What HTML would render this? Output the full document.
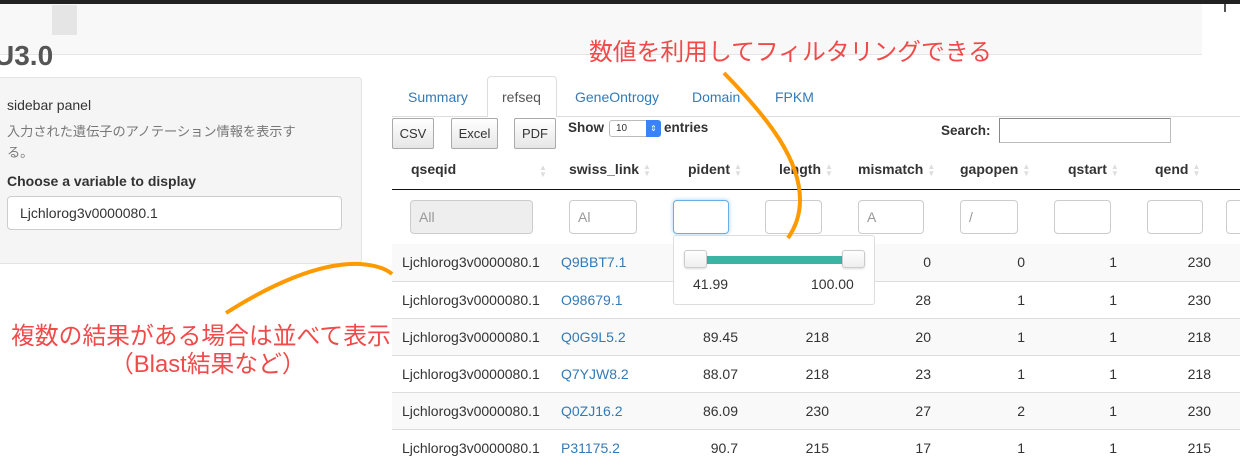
<!DOCTYPE html>
<html><head><meta charset="utf-8"><style>
*{margin:0;padding:0;box-sizing:border-box}
body{width:1240px;height:448px;overflow:hidden;background:#fff;font-family:"Liberation Sans","Noto Sans CJK JP",sans-serif;color:#333;position:relative;font-size:14px}
.a{position:absolute;white-space:nowrap}
.btn{position:absolute;top:118px;height:31px;border:1px solid #aaa;border-radius:2px;background:linear-gradient(#fff,#e6e6e6);font-size:13px;text-align:center;line-height:29px}
.th{position:absolute;top:161px;font-weight:bold;font-size:14px}
.sort{display:inline-block;width:8px;margin-left:4px;color:#ddd;font-size:8px;line-height:7px;vertical-align:middle}
.fi{position:absolute;top:200px;height:34px;border:1px solid #ccc;border-radius:4px;background:#fff;font-size:14px;color:#999;padding-left:8px;line-height:32px}
.row{position:absolute;left:392px;width:848px;height:37px;border-top:1px solid #ddd}
.c{position:absolute;top:10px;font-size:14px;color:#333}
.r{text-align:right}
.lk{color:#337ab7}
</style></head><body>
<div class="a" style="left:0;top:0;width:1240px;height:4px;background:#222"></div>
<div class="a" style="left:0;top:4px;width:1202px;height:51px;background:#f8f8f8;border-bottom:1px solid #e5e5e5"></div>
<div class="a" style="left:1224px;top:4px;width:2px;height:8px;background:#555"></div>
<div class="a" style="left:52px;top:5px;width:25px;height:30px;background:#e5e5e5"></div>
<div class="a" style="left:-6px;top:40px;font-size:28px;font-weight:bold;color:#555">U3.0</div>
<div class="a" style="left:-5px;top:77px;width:367px;height:187px;background:#f5f5f5;border:1px solid #e3e3e3;border-radius:4px"></div>
<div class="a" style="left:7px;top:97px;font-size:14px">sidebar panel</div>
<div class="a" style="left:7px;top:121px;font-size:13.2px;color:#777;line-height:21px;white-space:normal;width:312px">入力された遺伝子のアノテーション情報を表示する。</div>
<div class="a" style="left:7px;top:173px;font-size:14px;font-weight:bold">Choose a variable to display</div>
<div class="a" style="left:7px;top:196px;width:335px;height:34px;background:#fff;border:1px solid #ccc;border-radius:4px;padding-left:12px;line-height:32px;font-size:14px">Ljchlorog3v0000080.1</div>

<div class="a" style="left:392px;top:116px;width:848px;border-top:1px solid #ddd"></div>
<div class="a" style="left:487px;top:76px;width:70px;height:41px;border:1px solid #ddd;border-bottom:none;border-radius:4px 4px 0 0;background:#fff"></div>
<div class="a lk" style="left:408px;top:89px">Summary</div>
<div class="a" style="left:502px;top:89px;color:#555">refseq</div>
<div class="a lk" style="left:575px;top:89px">GeneOntrogy</div>
<div class="a lk" style="left:692px;top:89px">Domain</div>
<div class="a lk" style="left:775px;top:89px">FPKM</div>

<div class="btn" style="left:392px;width:42px">CSV</div>
<div class="btn" style="left:451px;width:47px">Excel</div>
<div class="btn" style="left:514px;width:42px">PDF</div>
<div class="a" style="left:568px;top:120px;font-weight:bold;font-size:13.5px">Show</div>
<div class="a" style="left:609px;top:120px;width:52px;height:17px;border:1px solid #bbb;border-radius:3px;font-size:10px;line-height:15px;padding-left:6px;background:#fff">10</div>
<div class="a" style="left:646px;top:120px;width:15px;height:17px;background:#3a82f7;border-radius:0 3px 3px 0;color:#fff;font-size:8px;text-align:center;line-height:17px">⇕</div>
<div class="a" style="left:664px;top:120px;font-weight:bold;font-size:13.5px">entries</div>
<div class="a" style="left:941px;top:123px;font-weight:bold;font-size:13.5px">Search:</div>
<div class="a" style="left:999px;top:118px;width:172px;height:25px;border:1px solid #bbb;border-top-color:#888;border-left-color:#888"></div>

<div class="th" style="left:411px">qseqid</div><div class="a sort" style="left:535px;top:164px">▲<br>▼</div>
<div class="th" style="left:569px">swiss_link<span class="sort">▲<br>▼</span></div>
<div class="th" style="left:688px">pident<span class="sort">▲<br>▼</span></div>
<div class="th" style="left:779px">length<span class="sort">▲<br>▼</span></div>
<div class="th" style="left:858px">mismatch<span class="sort">▲<br>▼</span></div>
<div class="th" style="left:960px">gapopen<span class="sort">▲<br>▼</span></div>
<div class="th" style="left:1068px">qstart<span class="sort">▲<br>▼</span></div>
<div class="th" style="left:1155px">qend<span class="sort">▲<br>▼</span></div>
<div class="a" style="left:392px;top:189px;width:848px;height:1px;background:#111"></div>

<div class="fi" style="left:410px;width:123px;background:#eee">All</div>
<div class="fi" style="left:569px;width:68px">Al</div>
<div class="fi" style="left:673px;width:56px;border-color:#66afe9;box-shadow:0 0 4px rgba(102,175,233,.6)"></div>
<div class="fi" style="left:765px;width:57px"></div>
<div class="fi" style="left:858px;width:66px">A</div>
<div class="fi" style="left:960px;width:58px">/</div>
<div class="fi" style="left:1054px;width:57px"></div>
<div class="fi" style="left:1147px;width:56px"></div>
<div class="fi" style="left:1226px;width:20px"></div>
<div class="a" style="left:392px;top:244px;width:848px;height:1px;background:#111"></div>

<div class="row" style="top:244px;background:#f9f9f9;border-top:none"><div class="c" style="left:10px">Ljchlorog3v0000080.1</div><div class="c lk" style="left:169px">Q9BBT7.1</div><div class="c r" style="right:309px">0</div><div class="c r" style="right:215px">0</div><div class="c r" style="right:123px">1</div><div class="c r" style="right:29px">230</div></div>
<div class="row" style="top:281px"><div class="c" style="left:10px">Ljchlorog3v0000080.1</div><div class="c lk" style="left:169px">O98679.1</div><div class="c r" style="right:309px">28</div><div class="c r" style="right:215px">1</div><div class="c r" style="right:123px">1</div><div class="c r" style="right:29px">230</div></div>
<div class="row" style="top:318px;background:#f9f9f9"><div class="c" style="left:10px">Ljchlorog3v0000080.1</div><div class="c lk" style="left:169px">Q0G9L5.2</div><div class="c r" style="right:502px">89.45</div><div class="c r" style="right:411px">218</div><div class="c r" style="right:309px">20</div><div class="c r" style="right:215px">1</div><div class="c r" style="right:123px">1</div><div class="c r" style="right:29px">218</div></div>
<div class="row" style="top:355px"><div class="c" style="left:10px">Ljchlorog3v0000080.1</div><div class="c lk" style="left:169px">Q7YJW8.2</div><div class="c r" style="right:502px">88.07</div><div class="c r" style="right:411px">218</div><div class="c r" style="right:309px">23</div><div class="c r" style="right:215px">1</div><div class="c r" style="right:123px">1</div><div class="c r" style="right:29px">218</div></div>
<div class="row" style="top:392px;background:#f9f9f9"><div class="c" style="left:10px">Ljchlorog3v0000080.1</div><div class="c lk" style="left:169px">Q0ZJ16.2</div><div class="c r" style="right:502px">86.09</div><div class="c r" style="right:411px">230</div><div class="c r" style="right:309px">27</div><div class="c r" style="right:215px">2</div><div class="c r" style="right:123px">1</div><div class="c r" style="right:29px">230</div></div>
<div class="row" style="top:429px"><div class="c" style="left:10px">Ljchlorog3v0000080.1</div><div class="c lk" style="left:169px">P31175.2</div><div class="c r" style="right:502px">90.7</div><div class="c r" style="right:411px">215</div><div class="c r" style="right:309px">17</div><div class="c r" style="right:215px">1</div><div class="c r" style="right:123px">1</div><div class="c r" style="right:29px">215</div></div>

<div class="a" style="left:673px;top:235px;width:202px;height:70px;background:#fff;border:1px solid #ddd;border-radius:3px"></div>
<div class="a" style="left:697px;top:256px;width:156px;height:8px;background:#3cb4a4"></div>
<div class="a" style="left:684px;top:250px;width:23px;height:18px;background:linear-gradient(#fff,#eee);border:1px solid #ccc;border-radius:3px;box-shadow:0 1px 2px rgba(0,0,0,.15)"></div>
<div class="a" style="left:842px;top:250px;width:23px;height:18px;background:linear-gradient(#fff,#eee);border:1px solid #ccc;border-radius:3px;box-shadow:0 1px 2px rgba(0,0,0,.15)"></div>
<div class="a" style="left:693px;top:276px;font-size:14px">41.99</div>
<div class="a" style="left:811px;top:276px;font-size:14px">100.00</div>

<div class="a" style="left:589px;top:32px;font-size:23.8px;color:#f04a4a">数値を利用してフィルタリングできる</div>
<div class="a" style="left:11px;top:316px;font-size:23.8px;color:#f04a4a">複数の結果がある場合は並べて表示</div>
<div class="a" style="left:110px;top:344px;font-size:23.8px;color:#f04a4a">（Blast結果など）</div>
<svg class="a" style="left:0;top:0" width="1240" height="448">
<path d="M724 73 C770 120 800 160 800 200 C800 215 795 228 788 238" stroke="#f90" stroke-width="4" fill="none"/>
<path d="M226 313 C270 285 320 262 360 264 C375 265 385 268 392 274" stroke="#f90" stroke-width="4" fill="none"/>
</svg>
</body></html>
